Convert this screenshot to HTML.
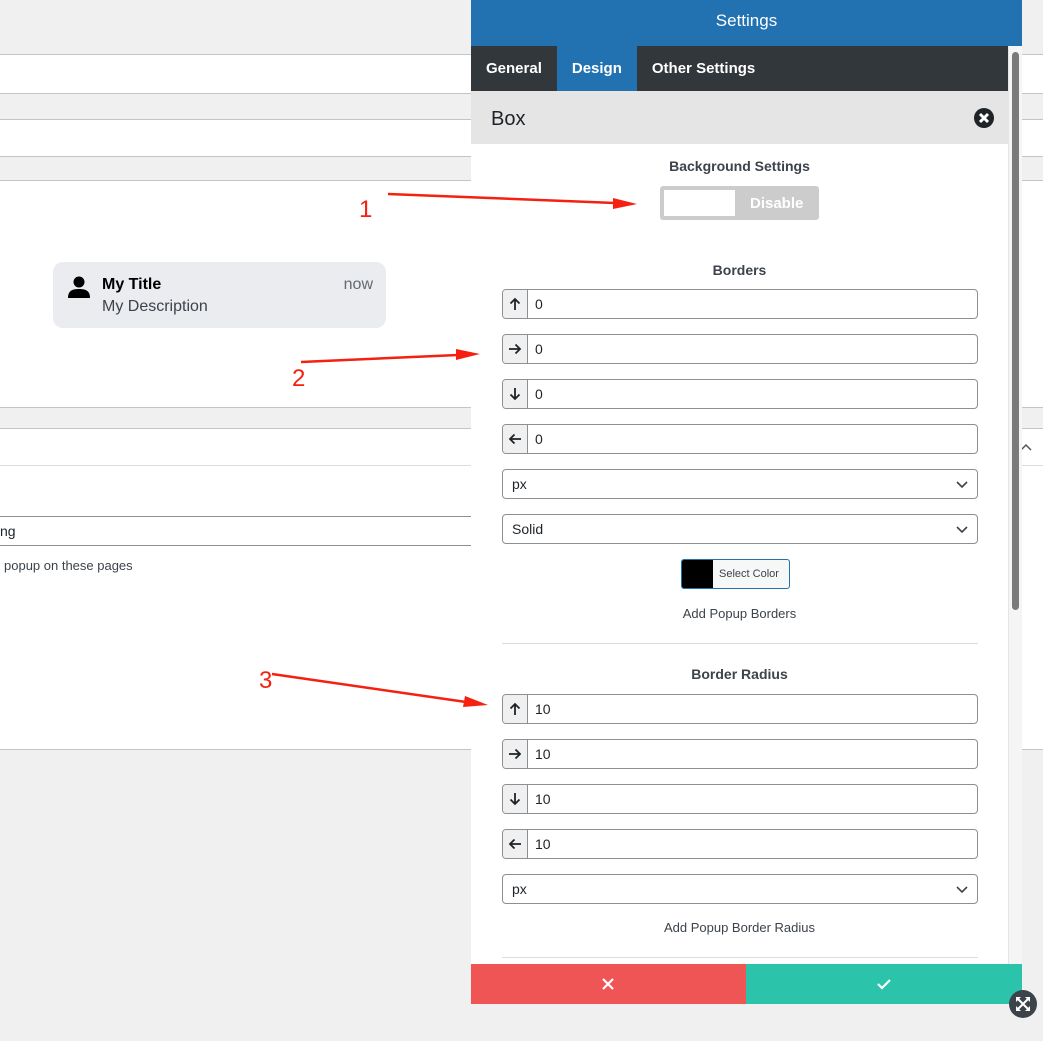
<!DOCTYPE html>
<html><head><meta charset="utf-8"><style>
*{box-sizing:border-box;margin:0;padding:0}
body{width:1043px;height:1041px;background:#f0f0f1;font-family:"Liberation Sans",sans-serif;position:relative;overflow:hidden;color:#1d2327}
.band{position:absolute;left:0;width:1043px;background:#fff;border-top:1px solid #c3c4c7;border-bottom:1px solid #c3c4c7}
.abs{position:absolute}
.panel{position:absolute;left:471px;top:0;width:551px;height:1004px;background:#fff}
.hdr{height:46px;background:#2271b1;color:#fff;font-size:17px;text-align:center;line-height:42px}
.tabs{height:45px;background:#32373c;display:flex;color:#fff;font-weight:bold;font-size:15px;width:537px}
.tabs div{line-height:45px;padding:0 15px}
.box{height:53px;background:#e5e5e5;font-size:20px;line-height:56px;padding-left:20px;position:relative;width:537px}
.inp{position:absolute;left:502px;width:476px;height:30px;border:1px solid #8c8f94;border-radius:4px;background:#fff;font-size:14px;line-height:28px}
.inp .pre{position:absolute;left:0;top:0;width:25px;height:28px;background:#f0f0f1;border-right:1px solid #8c8f94;border-radius:3px 0 0 3px}
.inp .pre svg{position:absolute;left:5px;top:7px}
.inp .v{position:absolute;left:32px}
.sel{padding-left:9px}
.sel svg{position:absolute;right:8px;top:9px}
.lbl{position:absolute;left:471px;width:537px;text-align:center;font-size:14px;color:#3c434a}
.b{font-weight:bold}
.hr{position:absolute;left:502px;width:476px;height:1px;background:#dcdcde}
</style></head><body>
<div class="band" style="top:54px;height:40px"></div>
<div class="band" style="top:119px;height:38px"></div>
<div class="band" style="top:180px;height:228px"></div>
<div class="band" style="top:428px;height:38px"></div>
<div class="band" style="top:465px;height:285px;border-top:1px solid #dcdcde"></div>
<div class="abs" style="left:0;top:516px;width:480px;height:30px;background:#fff;border-top:1px solid #8c8f94;border-bottom:1px solid #8c8f94;font-size:14px;line-height:28px">ng</div>
<div class="abs" style="left:4px;top:558px;font-size:13px;color:#3c434a">popup on these pages</div>
<svg class="abs" style="left:1019px;top:441px" width="14" height="12"><path d="M2 9l5-5 5 5" stroke="#555" stroke-width="1.5" fill="none"/></svg>
<div class="abs" style="left:53px;top:262px;width:333px;height:66px;background:#ebecf0;border-radius:10px">
<svg class="abs" style="left:15px;top:14px" width="22" height="24" viewBox="0 0 22 24"><circle cx="11" cy="6" r="5.5" fill="#000"/><path d="M0 22c0-7 4-9 11-9s11 2 11 9z" fill="#000"/></svg>
<div class="abs b" style="left:49px;top:14px;font-size:16px;color:#000">My Title</div>
<div class="abs" style="left:49px;top:36px;font-size:16px;color:#3c434a">My Description</div>
<div class="abs" style="right:13px;top:14px;font-size:16px;color:#646970">now</div>
</div>
<div class="panel">
<div class="hdr">Settings</div>
<div class="tabs"><div>General</div><div style="background:#2271b1">Design</div><div>Other Settings</div></div>
<div class="box">Box<svg class="abs" style="right:14px;top:17px" width="20" height="20" viewBox="0 0 20 20"><circle cx="10" cy="10" r="10" fill="#1d2327"/><path d="M6 6l8 8M14 6l-8 8" stroke="#fff" stroke-width="3"/></svg></div>
<div class="abs" style="left:537px;top:46px;width:14px;height:958px;background:#f5f5f5;border-left:1px solid #e5e5e5"><div style="position:absolute;left:3px;top:6px;width:7px;height:558px;background:#7a7a7a;border-radius:4px"></div></div>
</div>
<div class="lbl b" style="top:158px">Background Settings</div>
<div class="abs" style="left:660px;top:186px;width:159px;height:34px;background:#ccc;border-radius:3px"><div class="abs" style="left:4px;top:4px;width:71px;height:26px;background:#fff"></div><div class="abs b" style="left:90px;top:9px;color:#fff;font-size:15px">Disable</div></div>
<div class="lbl b" style="top:262px">Borders</div>
<div class="inp" style="top:289px"><div class="pre"><svg width="14" height="14"><path d="M7 13V2M2.5 6.5L7 2l4.5 4.5" stroke="#1d2327" stroke-width="1.8" fill="none"/></svg></div><div class="v">0</div></div>
<div class="inp" style="top:334px"><div class="pre"><svg width="14" height="14"><path d="M1 7h11M7.5 2.5L12 7l-4.5 4.5" stroke="#1d2327" stroke-width="1.8" fill="none"/></svg></div><div class="v">0</div></div>
<div class="inp" style="top:379px"><div class="pre"><svg width="14" height="14"><path d="M7 1v11M2.5 7.5L7 12l4.5-4.5" stroke="#1d2327" stroke-width="1.8" fill="none"/></svg></div><div class="v">0</div></div>
<div class="inp" style="top:424px"><div class="pre"><svg width="14" height="14"><path d="M13 7H2M6.5 2.5L2 7l4.5 4.5" stroke="#1d2327" stroke-width="1.8" fill="none"/></svg></div><div class="v">0</div></div>
<div class="inp sel" style="top:469px">px<svg width="14" height="10"><path d="M2 3l5 5 5-5" stroke="#3c434a" stroke-width="1.6" fill="none"/></svg></div>
<div class="inp sel" style="top:514px">Solid<svg width="14" height="10"><path d="M2 3l5 5 5-5" stroke="#3c434a" stroke-width="1.6" fill="none"/></svg></div>
<div class="abs" style="left:681px;top:559px;width:109px;height:30px;border:1px solid #2271b1;border-radius:3px;background:#f6f7f7;overflow:hidden"><div class="abs" style="left:0;top:0;width:31px;height:28px;background:#000"></div><div class="abs" style="left:37px;top:8px;font-size:11px;color:#3c434a">Select Color</div></div>
<div class="lbl" style="top:606px;font-size:13px">Add Popup Borders</div>
<div class="hr" style="top:643px"></div>
<div class="lbl b" style="top:666px">Border Radius</div>
<div class="inp" style="top:694px"><div class="pre"><svg width="14" height="14"><path d="M7 13V2M2.5 6.5L7 2l4.5 4.5" stroke="#1d2327" stroke-width="1.8" fill="none"/></svg></div><div class="v">10</div></div>
<div class="inp" style="top:739px"><div class="pre"><svg width="14" height="14"><path d="M1 7h11M7.5 2.5L12 7l-4.5 4.5" stroke="#1d2327" stroke-width="1.8" fill="none"/></svg></div><div class="v">10</div></div>
<div class="inp" style="top:784px"><div class="pre"><svg width="14" height="14"><path d="M7 1v11M2.5 7.5L7 12l4.5-4.5" stroke="#1d2327" stroke-width="1.8" fill="none"/></svg></div><div class="v">10</div></div>
<div class="inp" style="top:829px"><div class="pre"><svg width="14" height="14"><path d="M13 7H2M6.5 2.5L2 7l4.5 4.5" stroke="#1d2327" stroke-width="1.8" fill="none"/></svg></div><div class="v">10</div></div>
<div class="inp sel" style="top:874px">px<svg width="14" height="10"><path d="M2 3l5 5 5-5" stroke="#3c434a" stroke-width="1.6" fill="none"/></svg></div>
<div class="lbl" style="top:920px;font-size:13px">Add Popup Border Radius</div>
<div class="hr" style="top:957px"></div>
<div class="abs" style="left:471px;top:964px;width:275px;height:40px;background:#ef5555"><svg class="abs" style="left:130px;top:13px" width="14" height="14"><path d="M2 2l10 10M12 2L2 12" stroke="#fff" stroke-width="2.2"/></svg></div>
<div class="abs" style="left:746px;top:964px;width:276px;height:40px;background:#2bc4ab"><svg class="abs" style="left:130px;top:13px" width="16" height="14"><path d="M2 7l4 4 8-8" stroke="#fff" stroke-width="2.2" fill="none"/></svg></div>
<div class="abs" style="left:1009px;top:990px;width:28px;height:28px;border-radius:50%;background:#3c434a"><svg class="abs" style="left:6px;top:6px" width="16" height="16" viewBox="0 0 16 16" fill="#fff"><path d="M1 1h5L1 6zM15 1v5L10 1zM1 15v-5l5 5zM15 15h-5l5-5z"/><path d="M3 3l10 10M13 3L3 13" stroke="#fff" stroke-width="2"/></svg></div>
<svg class="abs" style="left:0;top:0" width="1043" height="1041">
<g stroke="#f5200f" stroke-width="2.5" fill="#f5200f">
<line x1="388" y1="194" x2="615" y2="203"/><path d="M637 204l-24-6v11z" stroke="none"/>
<line x1="301" y1="362" x2="458" y2="355"/><path d="M480 354l-24-5v11z" stroke="none"/>
<line x1="272" y1="674" x2="466" y2="702"/><path d="M488 705l-23-9-2 11z" stroke="none"/>
</g>
<g fill="#f5200f" font-family="Liberation Sans, sans-serif" font-size="24">
<text x="359" y="217">1</text><text x="292" y="386">2</text><text x="259" y="688">3</text>
</g></svg>
</body></html>
